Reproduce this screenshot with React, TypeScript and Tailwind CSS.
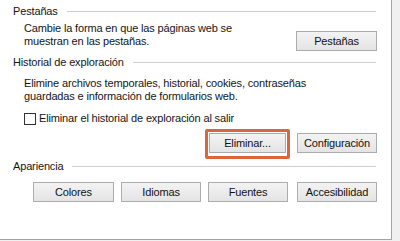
import React from "react";

const font = { fontFamily: '"Liberation Sans", Arial, sans-serif' };

function Heading({ title }: { title: string }) {
  return (
    <div className="flex items-center h-[14px] gap-[9px]">
      <span className="whitespace-nowrap">{title}</span>
      <div className="flex-1 h-px bg-[#cfcfcf] mr-[1px]" />
    </div>
  );
}

function Btn({ label, className = "" }: { label: string; className?: string }) {
  return (
    <button
      className={`h-[20px] border border-[#acacac] bg-gradient-to-b from-[#f3f3f3] to-[#e4e4e4] text-[11px] leading-none text-[#111] flex items-center justify-center ${className}`}
    >
      {label}
    </button>
  );
}

export default function App() {
  return (
    <div className="w-[400px] h-[241px] bg-[#f0f0f0] overflow-hidden" style={font}>
      <div className="w-[392px] h-[240px] bg-white border-r border-b border-[#a3a3a3] pl-[13px] pr-[14px] pt-[4px] text-[11px] text-[#151515] tracking-[-0.15px]">
        <Heading title="Pestañas" />
        <div className="flex justify-between items-start mt-[4px] pl-[11px]">
          <p className="leading-[13px]">
            Cambie la forma en que las páginas web se
            <br />
            muestran en las pestañas.
          </p>
          <Btn label="Pestañas" className="w-[81px] mt-[9px]" />
        </div>

        <div className="mt-[4px]">
          <Heading title="Historial de exploración" />
        </div>
        <div className="mt-[8px] pl-[11px]">
          <p className="leading-[13px]">
            Elimine archivos temporales, historial, cookies, contraseñas
            <br />
            guardadas e información de formularios web.
          </p>
          <label className="flex items-center gap-[3px] mt-[9px] h-[13px]">
            <span className="w-[12px] h-[12px] border border-[#333] bg-white" />
            <span>Eliminar el historial de exploración al salir</span>
          </label>
        </div>
        <div className="flex justify-end items-start mt-[4px] gap-[7px]">
          <div className="border-[3px] border-[#d9663c] rounded-[2px] p-[1px] pb-[3px]">
            <Btn label="Eliminar..." className="w-[77px]" />
          </div>
          <Btn label="Configuración" className="w-[80px] mt-[4px]" />
        </div>

        <Heading title="Apariencia" />
        <div className="flex mt-[9px] pl-[20px] gap-[7px]">
          <Btn label="Colores" className="w-[81px]" />
          <Btn label="Idiomas" className="w-[80px]" />
          <Btn label="Fuentes" className="w-[80px]" />
          <Btn label="Accesibilidad" className="w-[80px] ml-[2px]" />
        </div>
      </div>
    </div>
  );
}
